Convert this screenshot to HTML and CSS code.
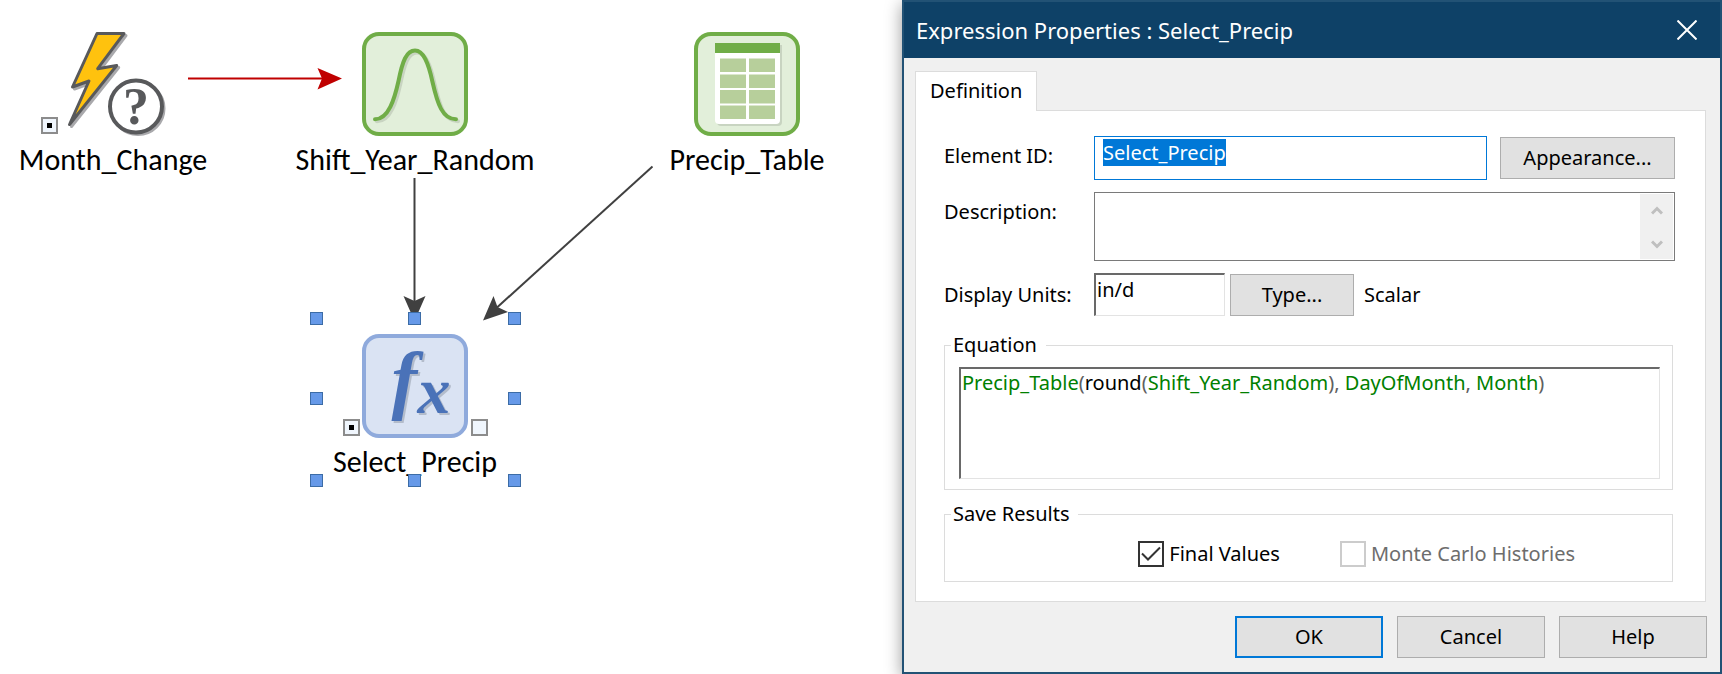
FILE: index.html
```
<!DOCTYPE html>
<html lang="en">
<head>
    <meta charset="UTF-8">
    <meta name="viewport" content="width=device-width, initial-scale=1.0">
    <title>Expression Properties : Select_Precip</title>
    <link rel="stylesheet" href="styles.css">
</head>
<body>
    <main class="workspace">
        <!-- Model graph -->
        <section class="graph" aria-label="Model">
            <svg class="wires" width="700" height="500">
                <g class="wire wire-trigger">
                    <path class="line" d="M188 78.5H322"/>
                    <path class="head" d="M342 78.5L317.5 68L322 78.5L317.5 89.5Z"/>
                </g>
                <g class="wire">
                    <path class="line" d="M414.5 178V302"/>
                    <path class="head" d="M414.5 321L403.5 296L414.5 301L425.5 296Z"/>
                    <path class="line" d="M652.5 166.5L497 307.5"/>
                    <path class="head" d="M483 320.5L493.5 296L497.5 307L508 312Z"/>
                </g>
            </svg>

            <div class="node node-month">
                <svg class="node-icon" width="200" height="104" viewBox="13 32 200 104">
                    <g class="bolt-shadow" transform="translate(2 2)">
                        <path d="M97 33.5H124L97.7 68.7L116.7 65.5L69.5 124.5L89 81L72.5 87Z"/>
                        <circle cx="136" cy="106.5" r="26"/>
                    </g>
                    <path class="bolt" d="M97 33.5H124L97.7 68.7L116.7 65.5L69.5 124.5L89 81L72.5 87Z"/>
                    <circle class="ring" cx="136" cy="106.5" r="26"/>
                    <text class="question" x="136" y="124" text-anchor="middle">?</text>
                </svg>
                <span class="node-label">Month_Change</span>
            </div>

            <div class="node node-random">
                <svg class="node-icon" width="106" height="104" viewBox="362.5 32 106 104">
                    <rect class="tile-green" x="364.5" y="34" width="102" height="100" rx="15"/>
                    <path class="bell-shadow" transform="translate(2 2)" d="M375.5 119.3C389 119.3 395 99 399 81C403 61 407 50.5 415.5 50.5C424 50.5 429 63 433 82C438 104 443 119.3 456.5 119.3"/>
                    <path class="bell" d="M375.5 119.3C389 119.3 395 99 399 81C403 61 407 50.5 415.5 50.5C424 50.5 429 63 433 82C438 104 443 119.3 456.5 119.3"/>
                </svg>
                <span class="node-label">Shift_Year_Random</span>
            </div>

            <div class="node node-table">
                <svg class="node-icon" width="106" height="104" viewBox="694 32 106 104">
                    <rect class="tile-green" x="696" y="34" width="102" height="100" rx="15"/>
                    <path class="sheet-shadow" d="M717 45H782V122Q782 126 778 126H721Q717 126 717 122Z"/>
                    <path class="sheet" d="M715 43H780V120Q780 124 776 124H719Q715 124 715 120Z"/>
                    <rect class="sheet-head" x="715" y="43" width="65" height="10"/>
                    <path class="cells" d="M720 58.5h26v13.5h-26zM749 58.5h26v13.5h-26zM720 74.5h26v13.5h-26zM749 74.5h26v13.5h-26zM720 90h26v13.5h-26zM749 90h26v13.5h-26zM720 105.5h26v13.5h-26zM749 105.5h26v13.5h-26z"/>
                </svg>
                <span class="node-label">Precip_Table</span>
            </div>

            <div class="node node-select">
                <svg class="node-icon" width="106" height="104" viewBox="362.5 334 106 104">
                    <rect class="tile-blue" x="364.5" y="336" width="102" height="100" rx="15"/>
                    <text class="fx" x="392" y="405"><tspan class="fx-f">f</tspan><tspan class="fx-x" x="418" y="413">x</tspan></text>
                </svg>
                <span class="node-label">Select_Precip</span>
            </div>

            <!-- Ports and selection handles -->
            <svg class="overlay" width="700" height="500">
                <g class="port">
                    <rect x="42" y="118" width="15" height="15"/>
                    <rect x="344" y="420" width="15" height="15"/>
                    <rect x="472" y="420" width="15" height="15"/>
                </g>
                <path d="M47 123h5v5h-5zM349 425h5v5h-5z"/>
                <g class="handle">
                    <rect x="310.5" y="312.5" width="12" height="12"/>
                    <rect x="408.5" y="312.5" width="12" height="12"/>
                    <rect x="508.5" y="312.5" width="12" height="12"/>
                    <rect x="310.5" y="392.5" width="12" height="12"/>
                    <rect x="508.5" y="392.5" width="12" height="12"/>
                    <rect x="310.5" y="474.5" width="12" height="12"/>
                    <rect x="408.5" y="474.5" width="12" height="12"/>
                    <rect x="508.5" y="474.5" width="12" height="12"/>
                </g>
            </svg>
        </section>

        <!-- Properties dialog -->
        <form class="dialog" role="dialog" aria-labelledby="dialogTitle">
            <header class="titlebar">
                <h1 id="dialogTitle">Expression Properties : Select_Precip</h1>
                <button type="button" class="close" aria-label="Close">
                    <svg width="20" height="20" viewBox="0 0 20 20"><path d="M.5 .5L19.5 19.5M19.5 .5L.5 19.5"/></svg>
                </button>
            </header>

            <div class="dialog-body">
                <div class="tabs" role="tablist">
                    <button type="button" class="tab" role="tab" aria-selected="true">Definition</button>
                </div>

                <div class="panel" role="tabpanel">
                    <div class="row row-id">
                        <label for="elementId">Element ID:</label>
                        <input type="text" id="elementId" value="Select_Precip" spellcheck="false">
                        <button type="button" class="btn btn-appearance">Appearance...</button>
                    </div>
                    <div class="row row-top">
                        <label for="description">Description:</label>
                        <div class="memo">
                            <textarea id="description"></textarea>
                            <div class="scrollbar">
                                <svg width="12" height="9" viewBox="0 0 12 9"><path d="M1 7.5L6 2.5L11 7.5"/></svg>
                                <svg width="12" height="9" viewBox="0 0 12 9"><path d="M1 1.5L6 6.5L11 1.5"/></svg>
                            </div>
                        </div>
                    </div>
                    <div class="row row-units">
                        <label for="units">Display Units:</label>
                        <input type="text" id="units" class="sunken" value="in/d" spellcheck="false">
                        <button type="button" class="btn btn-type">Type...</button>
                        <span class="unit-kind">Scalar</span>
                    </div>

                    <fieldset class="group group-equation">
                        <legend>Equation</legend>
                        <div class="equation sunken" role="textbox" aria-label="Equation" contenteditable="true" spellcheck="false"><span class="ref">Precip_Table</span><span class="op">(</span>round<span class="op">(</span><span class="ref">Shift_Year_Random</span><span class="op">),</span> <span class="ref">DayOfMonth</span><span class="op">,</span> <span class="ref">Month</span><span class="op">)</span></div>
                    </fieldset>

                    <fieldset class="group">
                        <legend>Save Results</legend>
                        <div class="checks">
                            <label class="check"><input type="checkbox" checked>Final Values</label>
                            <label class="check check-disabled"><input type="checkbox" disabled>Monte Carlo Histories</label>
                        </div>
                    </fieldset>
                </div>

                <footer class="actions">
                    <button type="button" class="btn btn-default">OK</button>
                    <button type="button" class="btn">Cancel</button>
                    <button type="button" class="btn">Help</button>
                </footer>
            </div>
        </form>
    </main>

    <script>
        // Start with the element name selected, ready for typing
        const elementId = document.getElementById('elementId');
        elementId.focus();
        elementId.select();
    </script>
</body>
</html>
```
FILE: styles.css
```
:root {
    --accent: #0078d7;
    --title-bg: #0e4167;
    --frame: #225275;
    --face: #f0f0f0;
    --line: #dcdcdc;
    --green: #70ad47;
    --ref: #008000;
}

* {
    box-sizing: border-box;
    margin: 0;
    padding: 0;
}

body {
    font-family: "Noto Sans", sans-serif;
    font-size: 20px;
    line-height: 28px;
    color: #000;
    background-color: #fff;
}

input, textarea, button {
    font: inherit;
    color: inherit;
    border-radius: 0;
    outline: none;
}

.workspace {
    display: grid;
    grid-template-columns: minmax(0, 11fr) minmax(0, 10fr);
    min-height: 100vh;
}

/* Model graph */
.graph {
    position: relative;
}

.wires,
.overlay {
    position: absolute;
    left: 0;
    top: 0;
}

.line {
    fill: none;
    stroke: #404040;
    stroke-width: 2;
}

.head {
    fill: #404040;
}

.wire-trigger .line {
    stroke: #c00000;
}

.wire-trigger .head {
    fill: #c00000;
}

.node {
    position: absolute;
    width: 200px;
    display: flex;
    flex-direction: column;
    align-items: center;
    gap: 8px;
}

.node-month { left: 13px; top: 32px; }
.node-random { left: 315px; top: 32px; }
.node-table { left: 647px; top: 32px; }
.node-select { left: 315px; top: 334px; }

.node-icon {
    display: block;
    overflow: visible;
}

.node-label {
    font-family: Calibri, Carlito, Lato, sans-serif;
    font-size: 30px;
    line-height: 32px;
    white-space: nowrap;
}

.bolt {
    fill: #ffc20e;
    stroke: #58595b;
    stroke-width: 3;
    stroke-linejoin: round;
}

.bolt-shadow {
    fill: none;
    stroke: #a9a9ac;
    stroke-width: 3;
    stroke-linejoin: round;
}

.ring {
    fill: #fff;
    stroke: #58595b;
    stroke-width: 4;
}

.question {
    font: bold 52px "Liberation Serif", serif;
    fill: #58595b;
}

.tile-green {
    fill: #e2efda;
    stroke: var(--green);
    stroke-width: 4;
}

.tile-blue {
    fill: #dae3f3;
    stroke: #8faadc;
    stroke-width: 4;
}

.bell,
.bell-shadow {
    fill: none;
    stroke: var(--green);
    stroke-width: 4;
    stroke-linecap: round;
}

.bell-shadow {
    stroke: #c8d4c1;
}

.sheet { fill: #fff; }
.sheet-shadow { fill: #c8d4c1; }
.sheet-head { fill: var(--green); }
.cells { fill: #b7cf9b; }

.fx {
    font: italic bold 77px "Liberation Serif", serif;
    fill: #4a72b8;
    filter: drop-shadow(2px 2px 0 #b3bccb);
}

.fx-x {
    font-size: 66px;
}

.port rect {
    fill: #f0f6fd;
    stroke: #8c8c8c;
    stroke-width: 2;
}

.handle rect {
    fill: #6699e8;
    stroke: #3c6ca6;
}

/* Dialog */
.dialog {
    position: relative;
    border: 2px solid var(--frame);
    background-color: var(--face);
    box-shadow: 0 4px 16px rgba(0, 0, 0, 0.4);
}

.titlebar {
    display: flex;
    align-items: center;
    justify-content: space-between;
    height: 56px;
    padding: 0 23px 0 12px;
    background-color: var(--title-bg);
    color: #fff;
}

.titlebar h1 {
    font-size: 22px;
    font-weight: normal;
}

.close {
    display: flex;
    border: none;
    background: none;
}

.close path {
    fill: none;
    stroke: #fff;
    stroke-width: 2;
}

.dialog-body {
    padding: 13px 13px 14px 11px;
}

.tabs {
    display: flex;
}

.tab {
    position: relative;
    z-index: 1;
    height: 40px;
    margin-bottom: -1px;
    padding: 0 14px 2px;
    border: 1px solid var(--line);
    border-bottom: none;
    background-color: #fff;
}

.panel {
    margin-right: 1px;
    padding: 25px 30px 19px 28px;
    border: 1px solid var(--line);
    background-color: #fff;
}

.row {
    display: flex;
    align-items: center;
    margin-bottom: 12px;
}

.row-top {
    align-items: flex-start;
}

.row-units {
    margin-bottom: 15px;
}

.row label {
    flex: 0 0 150px;
}

.row-id label {
    padding-bottom: 4px;
}

.row-top label {
    padding-top: 6px;
}

#elementId {
    flex: 1;
    min-width: 0;
    height: 44px;
    padding: 3px 8px 14px;
    border: 1px solid var(--accent);
    line-height: 25px;
}

#elementId::selection {
    color: #fff;
    background-color: var(--accent);
}

.btn {
    width: 148px;
    height: 42px;
    border: 1px solid #adadad;
    background-color: #e1e1e1;
}

.btn-default {
    border: 2px solid var(--accent);
}

.btn-appearance {
    width: 175px;
    margin-left: 13px;
}

.btn-type {
    width: 124px;
    margin: 0 10px 0 5px;
}

.memo {
    flex: 1;
    display: flex;
    height: 69px;
    padding: 1px;
    border: 1px solid #7a7a7a;
}

.memo textarea {
    flex: 1;
    border: none;
    resize: none;
}

.scrollbar {
    display: flex;
    flex-direction: column;
    align-items: center;
    justify-content: space-between;
    width: 33px;
    padding: 12px 0 10px;
    background-color: var(--face);
}

.scrollbar path {
    fill: none;
    stroke: #bfbfbf;
    stroke-width: 3;
}

.sunken {
    border: 1px solid #e3e3e3;
    border-top: 2px solid #696969;
    border-left: 2px solid #696969;
}

#units {
    width: 131px;
    height: 43px;
    padding: 0 1px 12px;
}

.group {
    min-width: 0;
    margin-right: 2px;
    border: 1px solid var(--line);
}

.group legend {
    margin-left: 6px;
    padding: 0 9px 0 2px;
}

.group-equation {
    margin-bottom: 10px;
}

.equation {
    height: 112px;
    margin: 8px 12px 10px 14px;
    padding: 0 1px;
}

.ref { color: var(--ref); }
.op { color: #606060; }

.checks {
    display: flex;
    justify-content: flex-end;
    gap: 60px;
    padding: 13px 97px 14px 0;
}

.check {
    display: flex;
    align-items: center;
    gap: 5px;
    height: 26px;
}

.check input {
    appearance: none;
    width: 26px;
    height: 26px;
    border: 2px solid #333;
    background-color: #fff;
}

.check input:checked {
    background-image: url("data:image/svg+xml;charset=UTF-8,%3csvg xmlns='http://www.w3.org/2000/svg' viewBox='0 0 22 22' fill='none' stroke='%23333' stroke-width='2'%3e%3cpath d='M2 10.5L8 16.5L20 4.5'/%3e%3c/svg%3e");
}

.check-disabled {
    color: #6d6d6d;
}

.check-disabled input {
    border-color: #ccc;
}

.actions {
    display: flex;
    justify-content: flex-end;
    gap: 14px;
    margin-top: 14px;
}
```
